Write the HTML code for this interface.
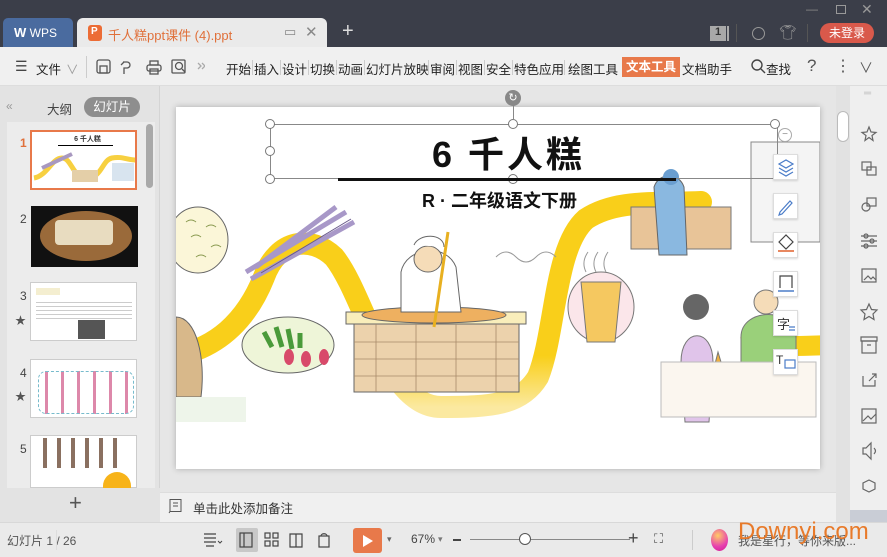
<!DOCTYPE html>
<html><head><meta charset="utf-8">
<style>
*{margin:0;padding:0;box-sizing:border-box}
body{width:887px;height:557px;overflow:hidden;position:relative;background:#e6e6e6;font-family:"Liberation Sans","Noto Sans CJK SC",sans-serif;color:#333}
.a{position:absolute}
.t{font-size:12.5px;white-space:nowrap}
.tb span{position:absolute;top:59px;font-size:12.5px;color:#222}
.sep{position:absolute;top:60px;width:1px;height:15px;background:#ccc}
.fl{position:absolute;left:773px;width:25px;height:26px;background:#fff;border:1px solid #ddd;box-shadow:0 1px 2px rgba(0,0,0,.15)}
.h{position:absolute;width:10px;height:10px;border:1px solid #777;border-radius:50%;background:#fff}
</style></head><body>
<div class="a" style="left:0;top:0;width:887px;height:47px;background:#3b3e49"></div>
<div class="a" style="left:3px;top:18px;width:70px;height:29px;background:#4a6b9f;border-radius:5px 5px 0 0"></div>
<div class="a t" style="left:14px;top:25px;color:#fff;font-size:12px"><b style="font-size:13px">W</b> WPS</div>
<div class="a" style="left:77px;top:18px;width:250px;height:29px;background:#eaeaea;border-radius:6px 6px 0 0"></div>
<div class="a" style="left:88px;top:25px;width:14px;height:16px;background:#ec6c35;border-radius:3px"></div>
<div class="a t" style="left:91px;top:26px;color:#fff;font-size:10px;font-weight:bold">P</div>
<div class="a t" style="left:108px;top:25px;color:#e0703a;font-size:13px">千人糕ppt课件 (4).ppt</div>
<div class="a t" style="left:284px;top:24px;color:#888;font-size:13px">▭</div>
<div class="a t" style="left:305px;top:23px;color:#888;font-size:15px">✕</div>
<div class="a t" style="left:342px;top:20px;color:#ddd;font-size:20px">+</div>
<div class="a t" style="left:806px;top:2px;color:#888;font-size:12px">—</div>
<div class="a" style="left:836px;top:5px;width:10px;height:9px;border:1px solid #999"></div>
<div class="a t" style="left:861px;top:1px;color:#999;font-size:14px">✕</div>
<div class="a" style="left:710px;top:26px;width:16px;height:15px;background:#a8a8a8;color:#333;font-size:11px;text-align:center;font-weight:bold">1</div>
<div class="a" style="left:727px;top:26px;width:2px;height:15px;background:#aaa"></div>
<div class="a" style="left:736px;top:24px;width:1px;height:18px;background:#555"></div>
<div class="a" style="left:752px;top:27px;width:13px;height:13px;border:1.5px solid #999;border-radius:50%"></div>
<div class="a t" style="left:779px;top:24px;color:#999;font-size:14px">👕︎</div>
<div class="a" style="left:807px;top:24px;width:1px;height:18px;background:#555"></div>
<div class="a" style="left:820px;top:23px;width:54px;height:20px;background:#d9594b;border-radius:10px;color:#fff;font-size:12px;text-align:center;line-height:20px">未登录</div>
<div class="a" style="left:0;top:47px;width:887px;height:39px;background:#f0f0f0;border-bottom:1px solid #ddd"></div>
<div class="a t" style="left:15px;top:58px;font-size:14px;color:#444">☰</div>
<div class="tb">
<span style="left:36px">文件</span><span style="left:66px;color:#999">∨</span>
<span style="left:226px">开始</span><span style="left:254px">插入</span><span style="left:282px">设计</span><span style="left:310px">切换</span><span style="left:338px">动画</span><span style="left:366px">幻灯片放映</span><span style="left:430px">审阅</span><span style="left:458px">视图</span><span style="left:486px">安全</span><span style="left:514px">特色应用</span><span style="left:568px">绘图工具</span>
<span style="left:682px">文档助手</span><span style="left:766px">查找</span>
</div>
<div class="a" style="left:622px;top:57px;width:58px;height:20px;background:#e8794a;color:#fff;font-size:12.5px;line-height:20px;text-align:center;font-weight:bold">文本工具</div>
<div class="sep" style="left:86px;height:22px;top:56px"></div>
<div class="sep" style="left:252px"></div><div class="sep" style="left:280px"></div><div class="sep" style="left:308px"></div><div class="sep" style="left:336px"></div><div class="sep" style="left:364px"></div><div class="sep" style="left:428px"></div><div class="sep" style="left:456px"></div><div class="sep" style="left:484px"></div><div class="sep" style="left:512px"></div><div class="sep" style="left:564px"></div>
<svg class="a" style="left:95px;top:57px" width="110" height="20" fill="none" stroke="#555" stroke-width="1.3">
<rect x="2" y="3" width="13" height="13" rx="2"/><rect x="5" y="9" width="7" height="7"/>
<path d="M28 5h4a3 3 0 010 6h-3v6M26 8l3-3"/>
<rect x="52" y="8" width="14" height="6" rx="2"/><rect x="55" y="4" width="8" height="4"/><rect x="55" y="12" width="8" height="5"/>
<rect x="77" y="3" width="13" height="13" rx="1"/><circle cx="84" cy="9" r="3.5"/><path d="M87 12l3 3"/>
<path d="M103 6l3 3-3 3M107 6l3 3-3 3" stroke="#aaa"/>
</svg>
<svg class="a" style="left:750px;top:58px" width="16" height="16" fill="none" stroke="#444" stroke-width="1.4"><circle cx="7" cy="7" r="5"/><path d="M11 11l4 4"/></svg>
<div class="a t" style="left:807px;top:56px;font-size:17px;color:#555">?</div>
<div class="a t" style="left:835px;top:56px;font-size:16px;color:#555">⋮</div>
<div class="a t" style="left:859px;top:58px;font-size:14px;color:#555">∨</div>
<div class="a" style="left:0;top:86px;width:160px;height:436px;background:#e3e3e3;border-right:1px solid #d4d4d4"></div>
<div class="a t" style="left:6px;top:99px;color:#999;font-size:12px">«</div>
<div class="a t" style="left:47px;top:99px;font-size:12.5px;color:#444">大纲</div>
<div class="a" style="left:84px;top:97px;width:56px;height:20px;background:#8e8e8e;border-radius:10px;color:#fff;font-size:12.5px;line-height:20px;text-align:center">幻灯片</div>
<div class="a" style="left:7px;top:122px;width:148px;height:366px;background:#ececec"></div>
<div class="a" style="left:146px;top:124px;width:7px;height:64px;background:#a9a9a9;border-radius:4px"></div>
<div class="a t" style="left:20px;top:136px;color:#e0703a;font-weight:bold;font-size:12px">1</div>
<div class="a t" style="left:20px;top:212px;color:#444;font-size:12px">2</div>
<div class="a t" style="left:20px;top:289px;color:#444;font-size:12px">3</div>
<div class="a t" style="left:20px;top:366px;color:#444;font-size:12px">4</div>
<div class="a t" style="left:20px;top:442px;color:#444;font-size:12px">5</div>
<div class="a t" style="left:15px;top:312px;color:#555;font-size:11px">★</div>
<div class="a t" style="left:15px;top:388px;color:#555;font-size:11px">★</div>
<div class="a" style="left:30px;top:130px;width:107px;height:60px;background:#fff;border:2px solid #e8794a"></div>
<div class="a" style="left:60px;top:134px;width:55px;height:10px;font-size:7px;font-weight:bold;text-align:center">6 千人糕</div>
<div class="a" style="left:58px;top:145px;width:55px;height:1px;background:#000"></div>
<svg class="a" style="left:32px;top:148px" width="103" height="40"><path d="M2 30C15 28 20 10 30 10S40 30 55 30 70 12 80 10 95 12 103 12" stroke="#f7d040" stroke-width="5" fill="none"/><path d="M10 20l30-14" stroke="#a898c0" stroke-width="4"/><rect x="40" y="22" width="26" height="12" fill="#e4cfa8"/><rect x="80" y="15" width="22" height="18" fill="#c8d8e8" opacity=".7"/></svg>
<div class="a" style="left:31px;top:206px;width:107px;height:61px;background:#111"></div>
<div class="a" style="left:40px;top:211px;width:92px;height:50px;border-radius:50%;background:#9a6a3a"></div>
<div class="a" style="left:55px;top:220px;width:58px;height:25px;background:#e8dcc0;border-radius:4px"></div>
<div class="a" style="left:30px;top:282px;width:107px;height:59px;background:#fff;border:1px solid #ccc"></div>
<div class="a" style="left:36px;top:288px;width:24px;height:7px;background:#f4eed0"></div>
<div class="a" style="left:36px;top:299px;width:96px;height:22px;background:repeating-linear-gradient(#fff 0 3px,#ccc 3px 4px)"></div>
<div class="a" style="left:78px;top:320px;width:27px;height:19px;background:#555"></div>
<div class="a" style="left:30px;top:359px;width:107px;height:59px;background:#fff;border:1px solid #ccc"></div>
<div class="a" style="left:38px;top:371px;width:96px;height:43px;border:1px dashed #7bc;border-radius:8px;background:repeating-linear-gradient(90deg,#fff 0 6px,#d8a 6px 9px,#fff 9px 16px)"></div>
<div class="a" style="left:30px;top:435px;width:107px;height:53px;background:#fff;border:1px solid #ccc"></div>
<div class="a" style="left:38px;top:438px;width:85px;height:30px;background:repeating-linear-gradient(90deg,#fff 0 5px,#8a7060 5px 9px,#fff 9px 14px)"></div>
<div class="a" style="left:103px;top:472px;width:28px;height:16px;background:#f7b319;border-radius:14px 14px 0 0"></div>
<div class="a" style="left:0;top:488px;width:160px;height:34px;background:#e3e3e3"></div>
<div class="a t" style="left:69px;top:490px;font-size:22px;color:#555">+</div>
<div class="a" style="left:176px;top:107px;width:644px;height:362px;background:#fff;box-shadow:0 0 6px rgba(0,0,0,.25)"></div>
<svg class="a" style="left:176px;top:107px" width="644" height="362">
<defs><linearGradient id="f" x1="0" y1="0" x2="0" y2="1"><stop offset=".75" stop-color="#f9cf1a"/><stop offset="1" stop-color="#fbe9a0"/></linearGradient></defs>
<path d="M-5 250C40 242 70 215 88 170C102 132 135 128 158 150C190 190 210 300 265 300C315 300 345 298 362 270C380 225 378 140 410 112C440 92 480 97 525 95" stroke="url(#f)" stroke-width="22" fill="none" stroke-linecap="round"/>
<path d="M565 240C595 238 620 240 650 238" stroke="#f9cf1a" stroke-width="20" fill="none"/>
<ellipse cx="22" cy="133" rx="30" ry="33" fill="#fbf6d8" stroke="#666"/>
<path d="M30 120q5-4 10 0M15 130q5-4 10 0M35 140q5-4 10 0M20 150q5-4 10 0M10 115q5-4 10 0" stroke="#8a9a50" fill="none"/>
<path d="M70 165L170 105M75 172L178 115M80 160L160 100" stroke="#a898c8" stroke-width="5"/>
<path d="M85 166L175 112" stroke="#6a5a8a" stroke-width="1"/>
<ellipse cx="112" cy="238" rx="46" ry="28" fill="#eef5d8" stroke="#666"/>
<path d="M88 225l8 15M100 220l6 20M112 222l4 20M124 226l0 15" stroke="#4a9a3a" stroke-width="5"/>
<ellipse cx="113" cy="250" rx="5" ry="8" fill="#d84a6a"/><ellipse cx="130" cy="252" rx="5" ry="8" fill="#d84a6a"/><ellipse cx="148" cy="250" rx="5" ry="8" fill="#d84a6a"/>
<rect x="178" y="213" width="165" height="72" fill="#ecd2ac" stroke="#666"/>
<rect x="170" y="205" width="180" height="12" fill="#f9eebb" stroke="#666"/>
<path d="M200 217v68M240 217v68M280 217v68M320 217v68M178 235h165M178 252h165M178 269h165" stroke="#a88a6a" stroke-width=".8"/>
<ellipse cx="258" cy="208" rx="72" ry="8" fill="#eeb060" stroke="#666"/>
<path d="M225 165c5-25 45-30 55-5l5 45h-60z" fill="#fff" stroke="#666"/>
<ellipse cx="252" cy="152" rx="14" ry="13" fill="#f5dcb8" stroke="#666"/>
<path d="M238 138c5-12 30-12 30 2" fill="#fff" stroke="#666"/>
<path d="M272 125l-14 95" stroke="#e8b020" stroke-width="3"/>
<path d="M320 150q10-10 20 0t20 0t20 0" stroke="#999" fill="none"/>
<ellipse cx="425" cy="200" rx="33" ry="35" fill="#fbe6ea" stroke="#777"/>
<path d="M405 175h40l-6 60h-28z" fill="#f5c860" stroke="#777"/>
<path d="M410 165q-5-10 2-20M420 165q-5-10 2-20M430 165q-5-10 2-20" stroke="#999" fill="none"/>
<rect x="455" y="100" width="100" height="42" fill="#e8c498" stroke="#777"/>
<path d="M478 80c5-15 25-15 30 0l3 68h-28z" fill="#8ab8e0" stroke="#666"/>
<circle cx="495" cy="70" r="8" fill="#6a9ed0"/>
<rect x="575" y="35" width="69" height="100" fill="#f4f4f4" stroke="#888"/>
<path d="M505 255c0-35 32-35 32 0l-4 60h-24z" fill="#e0c4ea" stroke="#777"/>
<circle cx="520" cy="200" r="13" fill="#666"/>
<path d="M565 230c0-30 55-30 55 0v25h-55z" fill="#9ad07a" stroke="#777"/>
<circle cx="590" cy="195" r="12" fill="#f5dcb8" stroke="#777"/>
<path d="M542 245l12 40h-22z" fill="#f0b040" stroke="#777"/>
<rect x="485" y="255" width="155" height="55" fill="#fbf6ef" stroke="#bbb"/>
<path d="M0 210c20 0 30 40 25 80h-25z" fill="#d8b88a" stroke="#666"/>
<rect x="0" y="290" width="70" height="25" fill="#eef5ea"/>
</svg>
<div class="a" style="left:270px;top:124px;width:508px;height:55px;border:1px solid #888"></div>
<div class="h" style="left:265px;top:119px"></div><div class="h" style="left:508px;top:119px"></div><div class="h" style="left:770px;top:119px"></div>
<div class="h" style="left:265px;top:146px"></div><div class="h" style="left:265px;top:174px"></div><div class="h" style="left:508px;top:174px"></div>
<div class="a" style="left:513px;top:102px;width:1px;height:18px;background:#888"></div>
<div class="a" style="left:505px;top:90px;width:16px;height:16px;border-radius:50%;background:#888;color:#fff;font-size:11px;text-align:center;line-height:16px">↻</div>
<div class="a" style="left:778px;top:128px;width:14px;height:14px;border-radius:50%;border:1px solid #aaa;background:#fff;font-size:10px;text-align:center;line-height:11px;color:#888">−</div>
<div class="a" style="left:338px;top:178px;width:338px;height:3px;background:#111"></div>
<div class="a" style="left:432px;top:126px;font-size:36px;font-weight:bold;color:#111;letter-spacing:3px;white-space:nowrap">6 千人糕</div>
<div class="a" style="left:422px;top:187px;font-size:18px;font-weight:bold;color:#111;white-space:nowrap">R · 二年级语文下册</div>
<div class="fl" style="top:154px"></div><div class="fl" style="top:193px"></div><div class="fl" style="top:232px"></div><div class="fl" style="top:271px"></div><div class="fl" style="top:310px"></div><div class="fl" style="top:349px"></div>
<svg class="a" style="left:773px;top:154px" width="26" height="222" fill="none" stroke="#4a7cc8" stroke-width="1.2">
<path d="M6 10l7-4 7 4-7 4zM6 14l7 4 7-4M6 18l7 4 7-4"/>
<path d="M7 58l10-11 2 2-10 11-3 1z"/>
<path d="M6 88l7-7 7 7-7 7z" stroke="#444"/><path d="M5 97h16" stroke="#e0602a" stroke-width="1.5"/>
<path d="M7 134v-12h12v12" stroke="#444"/><path d="M5 137h16" stroke-width="1.5"/>
<text x="4" y="175" font-size="13" fill="#333" stroke="none" font-family="Noto Sans CJK SC">字</text><path d="M16 173h6M16 176h6"/>
<text x="3" y="210" font-size="12" fill="#333" stroke="none">T</text><rect x="12" y="206" width="10" height="8"/>
</svg>
<div class="a" style="left:836px;top:86px;width:14px;height:436px;background:#e2e2e2"></div>
<div class="a" style="left:837px;top:111px;width:12px;height:31px;background:#fff;border:1px solid #bbb;border-radius:6px"></div>
<div class="a" style="left:850px;top:86px;width:37px;height:436px;background:#efefef"></div>
<div class="a" style="left:850px;top:510px;width:37px;height:12px;background:#c9cdd6"></div>
<svg class="a" style="left:859px;top:124px" width="20" height="380" fill="none" stroke="#666" stroke-width="1.2">
<path d="M10 3l2 5 5 .5-4 3 1 5-4-3-4 3 1-5-4-3 5-.5z"/>
<rect x="3" y="38" width="9" height="8"/><rect x="8" y="43" width="9" height="8"/>
<circle cx="7" cy="83" r="4"/><rect x="8" y="74" width="9" height="8"/>
<path d="M2 112h16M2 117h16M2 122h16"/><circle cx="7" cy="112" r="2"/><circle cx="13" cy="117" r="2"/><circle cx="7" cy="122" r="2"/>
<rect x="3" y="145" width="14" height="13"/><path d="M5 156l4-4 3 3 2-2 3 3"/>
<path d="M10 180l2.5 5.5 5.5.5-4 4 1 5.5-5-3-5 3 1-5.5-4-4 5.5-.5z"/>
<rect x="3" y="217" width="14" height="12"/><path d="M2 213h16v4H2zM8 221h4"/>
<path d="M4 252v10h12v-6M10 257l7-7M13 250h4v4"/>
<rect x="3" y="285" width="14" height="14"/><path d="M4 297l5-5 3 3 5-5"/>
<path d="M4 324h3l5-5v16l-5-5H4zM15 324c2 2 2 4 0 6"/>
<path d="M10 356l6 3v6l-6 3-6-3v-6z"/>
</svg>
<div class="a t" style="left:864px;top:88px;font-size:10px;color:#bbb">═</div>
<div class="a" style="left:160px;top:492px;width:676px;height:30px;background:#f0f0f0;border-top:1px solid #ddd"></div>
<svg class="a" style="left:168px;top:498px" width="16" height="16" fill="none" stroke="#555"><rect x="2" y="1.5" width="11" height="12"/><path d="M5 5h5M5 8h5M2 13.5l-1 1.5"/></svg>
<div class="a t" style="left:193px;top:498px;font-size:12.5px;color:#333">单击此处添加备注</div>
<div class="a" style="left:0;top:522px;width:887px;height:35px;background:#eaeaea;border-top:1px solid #d8d8d8"></div>
<div class="a t" style="left:7px;top:532px;font-size:12px;color:#555">幻灯片 1 / 26</div>
<div class="a" style="left:56px;top:530px;width:1px;height:20px;background:#ddd"></div>
<div class="a" style="left:236px;top:528px;width:22px;height:24px;background:#c8c8c8;border-radius:2px"></div>
<svg class="a" style="left:202px;top:530px" width="140" height="20" fill="none" stroke="#444" stroke-width="1.2">
<path d="M2 4h12M2 8h12M2 12h12M4 16h8"/><path d="M16 11l2 2 2-2" stroke-width="1"/>
<rect x="38" y="3" width="12" height="14"/><path d="M42 3v14"/>
<rect x="63" y="3" width="5" height="5"/><rect x="71" y="3" width="5" height="5"/><rect x="63" y="11" width="5" height="5"/><rect x="71" y="11" width="5" height="5"/>
<path d="M88 4h6v13h-6zM94 4h6v13h-6z"/>
<rect x="117" y="6" width="10" height="11"/><path d="M119 6c0-3 6-3 6 0"/>
</svg>
<div class="a" style="left:353px;top:528px;width:29px;height:25px;background:#e8794a;border-radius:3px"></div>
<svg class="a" style="left:362px;top:534px" width="12" height="14"><path d="M1 1l10 6-10 6z" fill="#fff"/></svg>
<div class="a t" style="left:387px;top:534px;font-size:9px;color:#666">▾</div>
<div class="a t" style="left:411px;top:532px;font-size:12px;color:#444">67%</div>
<div class="a t" style="left:438px;top:534px;font-size:9px;color:#777">▾</div>
<div class="a" style="left:453px;top:539px;width:8px;height:2px;background:#444"></div>
<div class="a" style="left:470px;top:539px;width:160px;height:1px;background:#888"></div>
<div class="a" style="left:519px;top:533px;width:12px;height:12px;border:1.5px solid #555;border-radius:50%;background:#fff"></div>
<div class="a t" style="left:628px;top:528px;font-size:18px;color:#444">+</div>
<div class="a t" style="left:654px;top:531px;font-size:13px;color:#555">⛶</div>
<div class="a" style="left:692px;top:530px;width:1px;height:20px;background:#ccc"></div>
<div class="a" style="left:711px;top:529px;width:17px;height:22px;border-radius:50%;background:radial-gradient(circle at 40% 30%,#ffcc66,#e63fb0 60%,#d01a90)"></div>
<div class="a t" style="left:738px;top:532px;font-size:12px;color:#555">我是星行，等你来版...</div>
<div class="a t" style="left:738px;top:518px;font-size:24px;color:#e87a2a">Downyi.com</div>
</body></html>
